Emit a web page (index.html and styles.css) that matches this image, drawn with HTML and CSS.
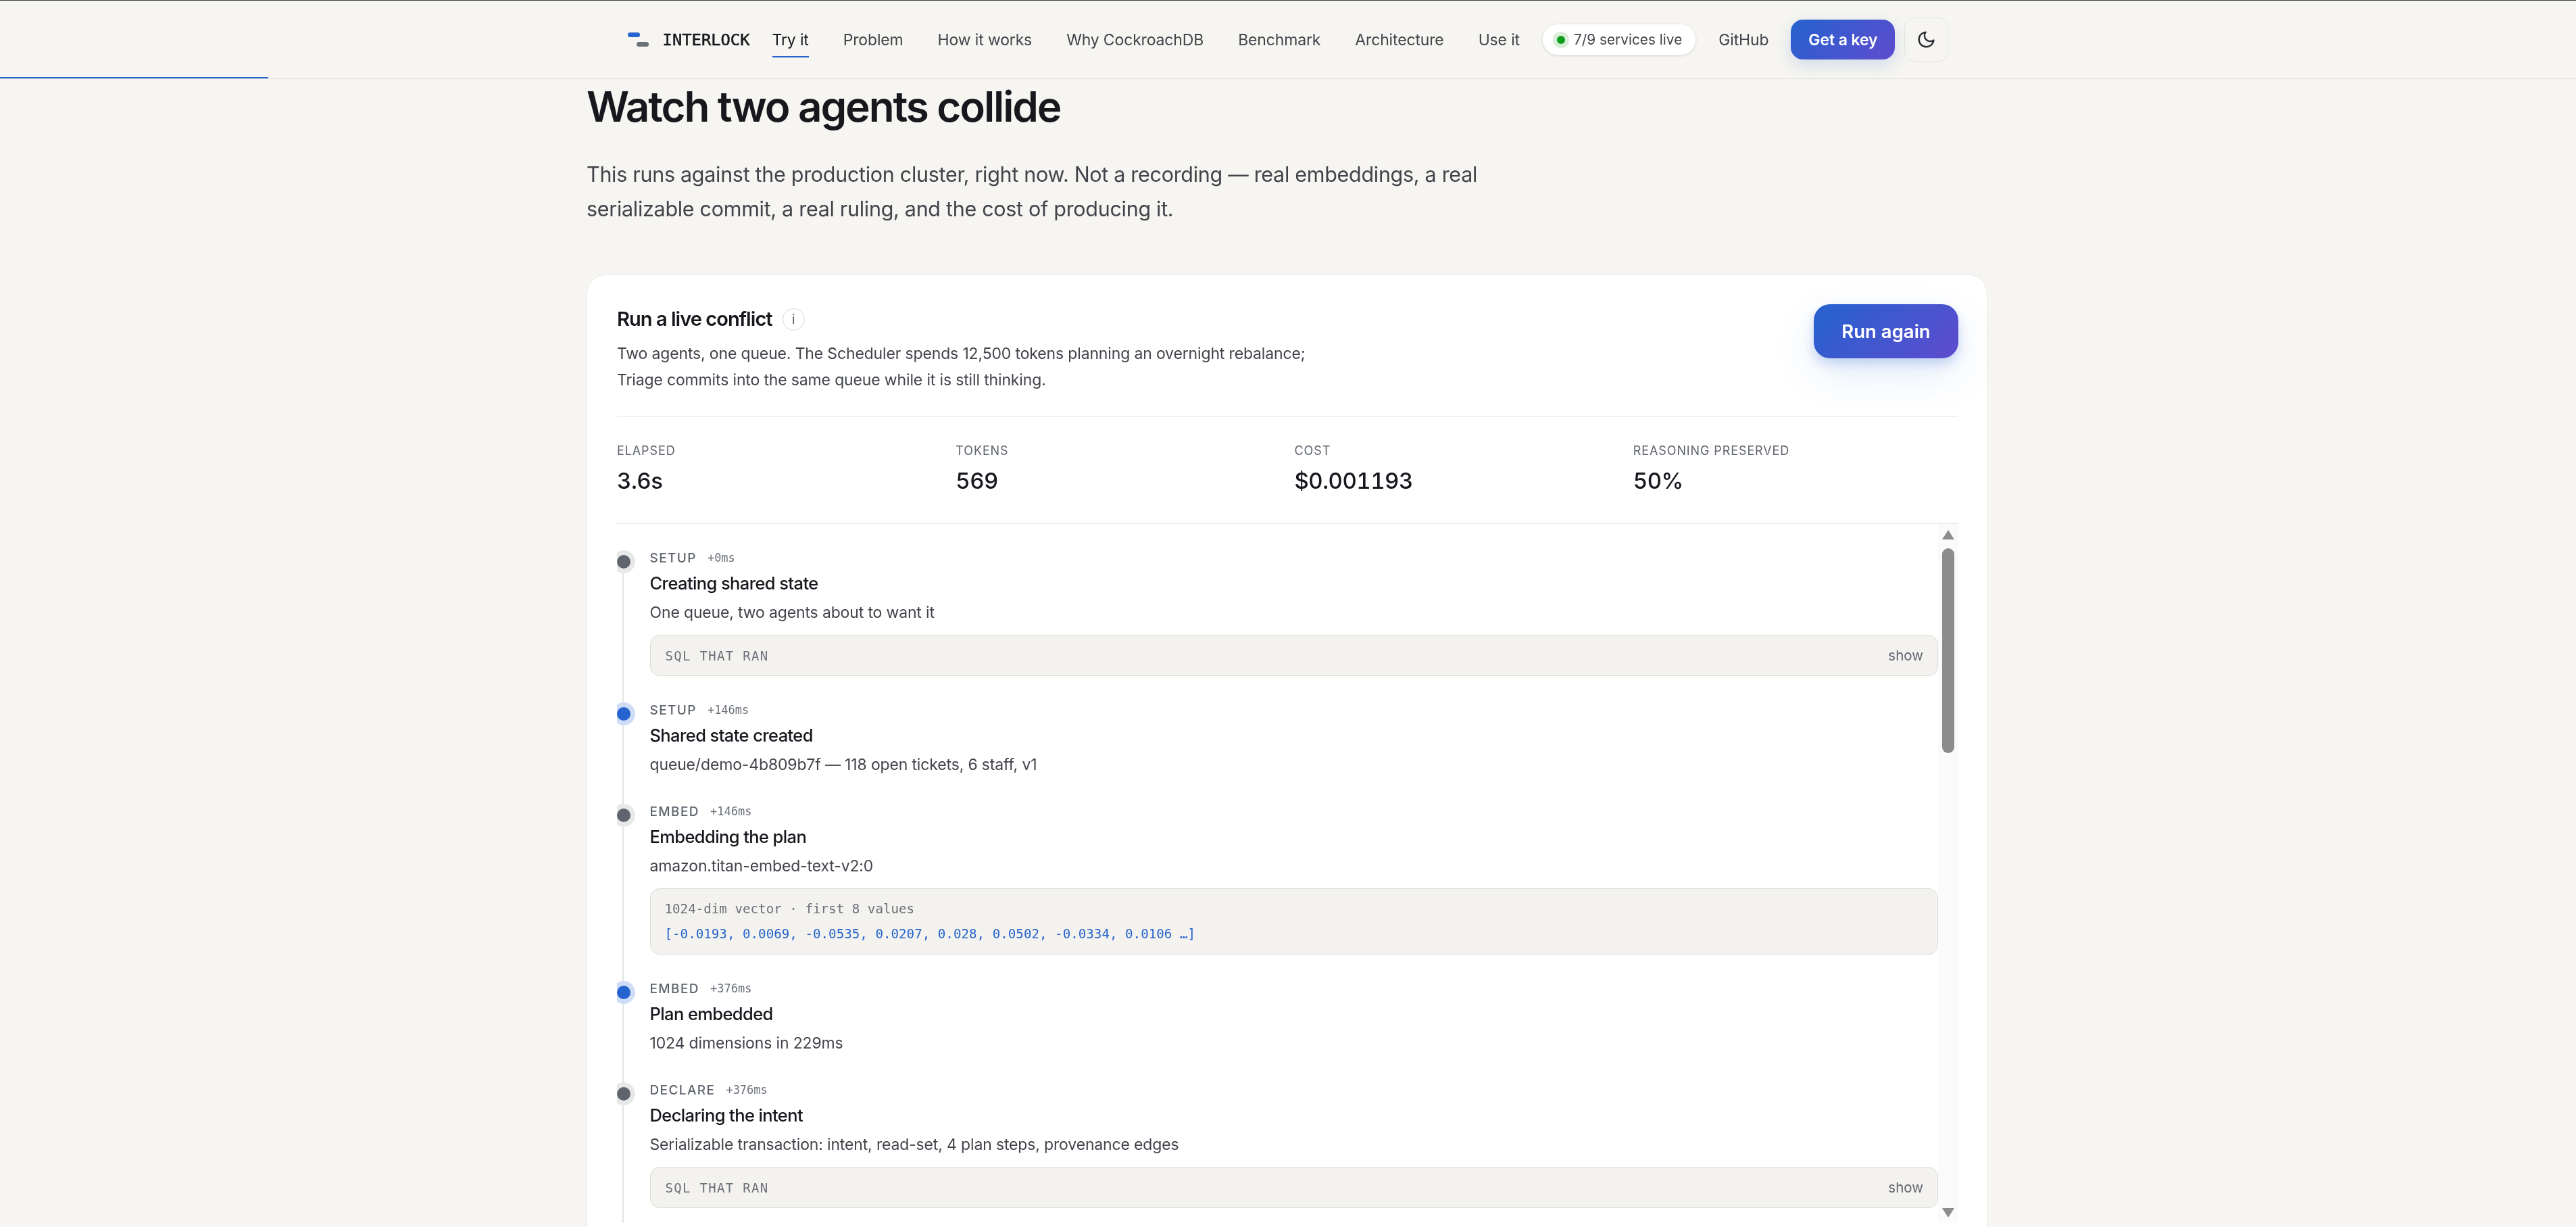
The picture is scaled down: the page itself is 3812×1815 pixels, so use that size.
FILE: index.html
```html
<!DOCTYPE html>
<html lang="en">
<head>
    <meta charset="UTF-8">
    <title>Interlock</title>
    <link rel="stylesheet" href="styles.css">
</head>
<body>
    <header class="nav">
        <a class="brand">
            <span class="brandMark"><i class="barBlue"></i><i class="barGrey"></i></span>
            <span class="brandName">INTERLOCK</span>
        </a>
        <nav class="links">
            <a class="link active">Try it</a>
            <a class="link">Problem</a>
            <a class="link">How it works</a>
            <a class="link">Why CockroachDB</a>
            <a class="link">Benchmark</a>
            <a class="link">Architecture</a>
            <a class="link">Use it</a>
        </nav>
        <span class="status"><i class="statusDot"></i>7/9 services live</span>
        <a class="link">GitHub</a>
        <a class="btnKey">Get a key</a>
        <button class="btnTheme">
            <svg viewBox="0 0 24 24" width="29" height="29" fill="none" stroke="#2a2d33" stroke-width="2" stroke-linecap="round" stroke-linejoin="round"><path d="M21 12.79A9 9 0 1 1 11.21 3 7 7 0 0 0 21 12.79z"/></svg>
        </button>
        <div class="progress"></div>
    </header>

    <main class="page">
        <h1 class="title">Watch two agents collide</h1>
        <p class="lead">This runs against the production cluster, right now. Not a recording — real embeddings, a real<br>serializable commit, a real ruling, and the cost of producing it.</p>

        <section class="card">
            <div class="cardHead">
                <div>
                    <h2 class="cardTitle">Run a live conflict <span class="info">i</span></h2>
                    <p class="cardDesc">Two agents, one queue. The Scheduler spends 12,500 tokens planning an overnight rebalance;<br>Triage commits into the same queue while it is still thinking.</p>
                </div>
                <button class="btnRun">Run again</button>
            </div>

            <div class="stats">
                <div><div class="statLabel">ELAPSED</div><div class="statValue">3.6s</div></div>
                <div><div class="statLabel">TOKENS</div><div class="statValue">569</div></div>
                <div><div class="statLabel">COST</div><div class="statValue">$0.001193</div></div>
                <div><div class="statLabel">REASONING PRESERVED</div><div class="statValue">50%</div></div>
            </div>

            <div class="logWrap">
                <div class="log">
                    <article class="step">
                        <i class="dot"></i>
                        <div class="stepBody">
                            <div class="stepMeta"><span class="stepKind">SETUP</span><span class="stepTime">+0ms</span></div>
                            <h3 class="stepTitle">Creating shared state</h3>
                            <p class="stepDesc">One queue, two agents about to want it</p>
                            <div class="sqlBox"><span class="sqlLabel">SQL THAT RAN</span><span class="sqlShow">show</span></div>
                        </div>
                    </article>
                    <article class="step">
                        <i class="dot done"></i>
                        <div class="stepBody">
                            <div class="stepMeta"><span class="stepKind">SETUP</span><span class="stepTime">+146ms</span></div>
                            <h3 class="stepTitle">Shared state created</h3>
                            <p class="stepDesc">queue/demo-4b809b7f — 118 open tickets, 6 staff, v1</p>
                        </div>
                    </article>
                    <article class="step">
                        <i class="dot"></i>
                        <div class="stepBody">
                            <div class="stepMeta"><span class="stepKind">EMBED</span><span class="stepTime">+146ms</span></div>
                            <h3 class="stepTitle">Embedding the plan</h3>
                            <p class="stepDesc">amazon.titan-embed-text-v2:0</p>
                            <div class="vecBox">
                                <div class="vecLabel">1024-dim vector · first 8 values</div>
                                <div class="vecValues">[-0.0193, 0.0069, -0.0535, 0.0207, 0.028, 0.0502, -0.0334, 0.0106 …]</div>
                            </div>
                        </div>
                    </article>
                    <article class="step">
                        <i class="dot done"></i>
                        <div class="stepBody">
                            <div class="stepMeta"><span class="stepKind">EMBED</span><span class="stepTime">+376ms</span></div>
                            <h3 class="stepTitle">Plan embedded</h3>
                            <p class="stepDesc">1024 dimensions in 229ms</p>
                        </div>
                    </article>
                    <article class="step">
                        <i class="dot"></i>
                        <div class="stepBody">
                            <div class="stepMeta"><span class="stepKind">DECLARE</span><span class="stepTime">+376ms</span></div>
                            <h3 class="stepTitle">Declaring the intent</h3>
                            <p class="stepDesc">Serializable transaction: intent, read-set, 4 plan steps, provenance edges</p>
                            <div class="sqlBox"><span class="sqlLabel">SQL THAT RAN</span><span class="sqlShow">show</span></div>
                        </div>
                    </article>
                </div>
                <div class="scrollbar">
                    <i class="arrowUp"></i>
                    <i class="thumb"></i>
                    <i class="arrowDown"></i>
                </div>
            </div>
        </section>
    </main>
</body>
</html>
```

FILE: styles.css
```css
* {
    box-sizing: border-box;
}

html,
body {
    height: 100%;
    overflow: hidden;
}

body {
    margin: 0;
    background-color: #f6f5f1;
    color: #16181d;
    font-family: Inter, "Noto Sans", sans-serif;
}

h1,
h2,
h3,
p {
    margin: 0;
}

/* barra de cima */
.nav {
    position: relative;
    display: flex;
    align-items: center;
    justify-content: center;
    gap: 33px;
    height: 117px;
    border-top: 1px solid #3d423d;
    border-bottom: 1px solid #dfdfdb;
    will-change: transform;
}

.brand {
    display: flex;
    align-items: center;
    gap: 21px;
}

.brandMark {
    display: flex;
    flex-direction: column;
    gap: 7px;
    width: 31px;
}

.brandMark i {
    display: block;
    width: 18px;
    height: 7px;
    border-radius: 4px;
}

.barBlue {
    background-color: #2563cf;
}

.barGrey {
    margin-left: 13px;
    background-color: #6b7079;
}

.brandName {
    font-family: "DejaVu Sans Mono", monospace;
    font-size: 23.8px;
    color: #16181d;
    -webkit-text-stroke: .5px #16181d;
}

.links {
    display: flex;
    gap: 51px;
}

.link {
    display: block;
    padding: 8px 0 6px;
    border-bottom: 2px solid transparent;
    font-size: 23px;
    line-height: 36px;
    letter-spacing: -.15px;
    color: #41444a;
}

.link.active {
    color: #16181d;
    border-bottom-color: #2563cf;
}

.status {
    display: flex;
    align-items: center;
    gap: 6px;
    height: 47px;
    padding: 0 20px 0 15px;
    border: 1px solid #ecebe7;
    border-radius: 24px;
    background-color: #fff;
    box-shadow: 0 1px 3px rgba(0, 0, 0, .12);
    font-size: 20.8px;
    color: #41444a;
}

.statusDot {
    width: 12px;
    height: 12px;
    margin: 0 7px 0 6px;
    border-radius: 50%;
    background-color: #0f9d1a;
    box-shadow: 0 0 0 6px #d9eeda;
}

.btnKey {
    display: flex;
    align-items: center;
    justify-content: center;
    width: 154px;
    height: 59px;
    border-radius: 18px;
    background: linear-gradient(135deg, #2563cf, #5f4bce);
    box-shadow: 0 8px 24px rgba(37, 99, 207, .18);
    font-size: 23px;
    font-weight: 600;
    letter-spacing: -.1px;
    color: #fff;
}

.btnTheme {
    display: flex;
    align-items: center;
    justify-content: center;
    width: 65px;
    height: 65px;
    margin-left: -19px;
    padding: 0;
    border: 1px solid #e3e3df;
    border-radius: 14px;
    background: transparent;
}

.progress {
    position: absolute;
    left: 0;
    bottom: 0;
    width: 397px;
    height: 2px;
    background-color: #2563cf;
}

/* conteudo */
.page {
    width: 2073px;
    margin-left: 868px;
    padding-top: 1px;
    will-change: transform;
}

.title {
    font-size: 62px;
    font-weight: 600;
    line-height: 80px;
    letter-spacing: -2.1px;
}

.lead {
    margin-top: 34px;
    font-size: 30.5px;
    line-height: 51px;
    letter-spacing: -.3px;
    color: #41444a;
}

.card {
    margin-top: 72px;
    padding: 43px 42px 43px 44px;
    border: 1px solid #e9e8e4;
    border-radius: 28px;
    background-color: #fff;
}

.cardHead {
    display: flex;
    justify-content: space-between;
    align-items: flex-start;
    padding-bottom: 35px;
    border-bottom: 1px solid #e6e6e3;
}

.cardTitle {
    display: flex;
    align-items: center;
    gap: 15px;
    margin-top: 3px;
    font-size: 29px;
    font-weight: 600;
    line-height: 38px;
    letter-spacing: -.95px;
}

.info {
    display: flex;
    align-items: center;
    justify-content: center;
    width: 33px;
    height: 33px;
    border: 1px solid #d8d8d4;
    border-radius: 50%;
    font-size: 20px;
    font-weight: 400;
    letter-spacing: 0;
    color: #5f646e;
}

.cardDesc {
    margin-top: 13px;
    font-size: 23px;
    line-height: 38.5px;
    letter-spacing: -.15px;
    color: #41444a;
}

.btnRun {
    width: 214px;
    height: 80px;
    border: 0;
    border-radius: 24px;
    background: linear-gradient(135deg, #2563cf, #5f4bce);
    box-shadow: 0 8px 16px rgba(37, 99, 207, .22), 0 24px 60px rgba(37, 99, 207, .12);
    font-family: inherit;
    font-size: 27.5px;
    font-weight: 600;
    color: #fff;
}

.stats {
    display: grid;
    grid-template-columns: repeat(4, 1fr);
    gap: 20px;
    padding: 37px 0 41px;
    border-bottom: 1px solid #e6e6e3;
}

.statLabel {
    font-size: 18px;
    line-height: 26px;
    letter-spacing: .9px;
    color: #5f646e;
}

.statValue {
    margin-top: 9px;
    font-size: 33px;
    font-weight: 500;
    line-height: 44px;
    letter-spacing: -.5px;
    font-variant-numeric: tabular-nums;
}

/* timeline */
.logWrap {
    display: flex;
    height: 1034px;
}

.log {
    position: relative;
    flex: 1;
    overflow: hidden;
    padding-top: 38px;
}

.log::before {
    content: "";
    position: absolute;
    left: 8px;
    top: 56px;
    bottom: 0;
    width: 2px;
    background-color: #e3e3e0;
}

.step {
    position: relative;
    display: flex;
    margin-bottom: 38px;
}

.dot {
    flex: none;
    width: 20px;
    height: 20px;
    margin: 8px 28.5px 0 0;
    border-radius: 50%;
    background-color: #5f646e;
    box-shadow: 0 0 0 7px #e8e8e8;
}

.dot.done {
    background-color: #2563cf;
    box-shadow: 0 0 0 7px #cfdcf5;
}

.stepBody {
    flex: 1;
}

.stepMeta {
    display: flex;
    align-items: center;
    gap: 16px;
    height: 24px;
}

.stepKind {
    font-size: 19px;
    font-weight: 500;
    letter-spacing: 1.4px;
    color: #5f646e;
}

.stepTime {
    font-family: "DejaVu Sans Mono", monospace;
    font-size: 17px;
    color: #6b7079;
}

.stepTitle {
    margin-top: 8px;
    font-size: 25.5px;
    font-weight: 500;
    line-height: 36px;
    letter-spacing: -.6px;
}

.stepDesc {
    margin-top: 7px;
    font-size: 23px;
    line-height: 37px;
    letter-spacing: -.15px;
    color: #41444a;
}

.sqlBox {
    display: flex;
    justify-content: space-between;
    align-items: center;
    height: 61px;
    margin-top: 14px;
    padding: 0 21px 0 22px;
    border: 1px solid #dcdcd8;
    border-radius: 14px;
    background-color: #f3f2ee;
}

.sqlLabel {
    font-family: "DejaVu Sans Mono", monospace;
    font-size: 19px;
    letter-spacing: 1.3px;
    color: #6b7079;
}

.sqlShow {
    font-size: 20.5px;
    color: #5f646e;
}

.vecBox {
    height: 98px;
    margin-top: 14px;
    padding: 11px 21px;
    border: 1px solid #dcdcd8;
    border-radius: 14px;
    background-color: #f3f2ee;
    font-family: "DejaVu Sans Mono", monospace;
    font-size: 19.2px;
    line-height: 37px;
}

.vecLabel {
    color: #6b7079;
}

.vecValues {
    color: #2563cf;
}

/* scrollbar desenhada */
.scrollbar {
    display: flex;
    flex-direction: column;
    align-items: center;
    flex: none;
    width: 30px;
    padding: 9px 0 8px;
    background-color: #fafafa;
}

.arrowUp,
.arrowDown {
    width: 0;
    height: 0;
    border-left: 9px solid transparent;
    border-right: 9px solid transparent;
}

.arrowUp {
    border-bottom: 14px solid #8c8c8c;
}

.arrowDown {
    margin-top: auto;
    border-top: 14px solid #8c8c8c;
}

.thumb {
    width: 18px;
    height: 303px;
    margin-top: 13px;
    border-radius: 9px;
    background-color: #8c8c8c;
}
```
